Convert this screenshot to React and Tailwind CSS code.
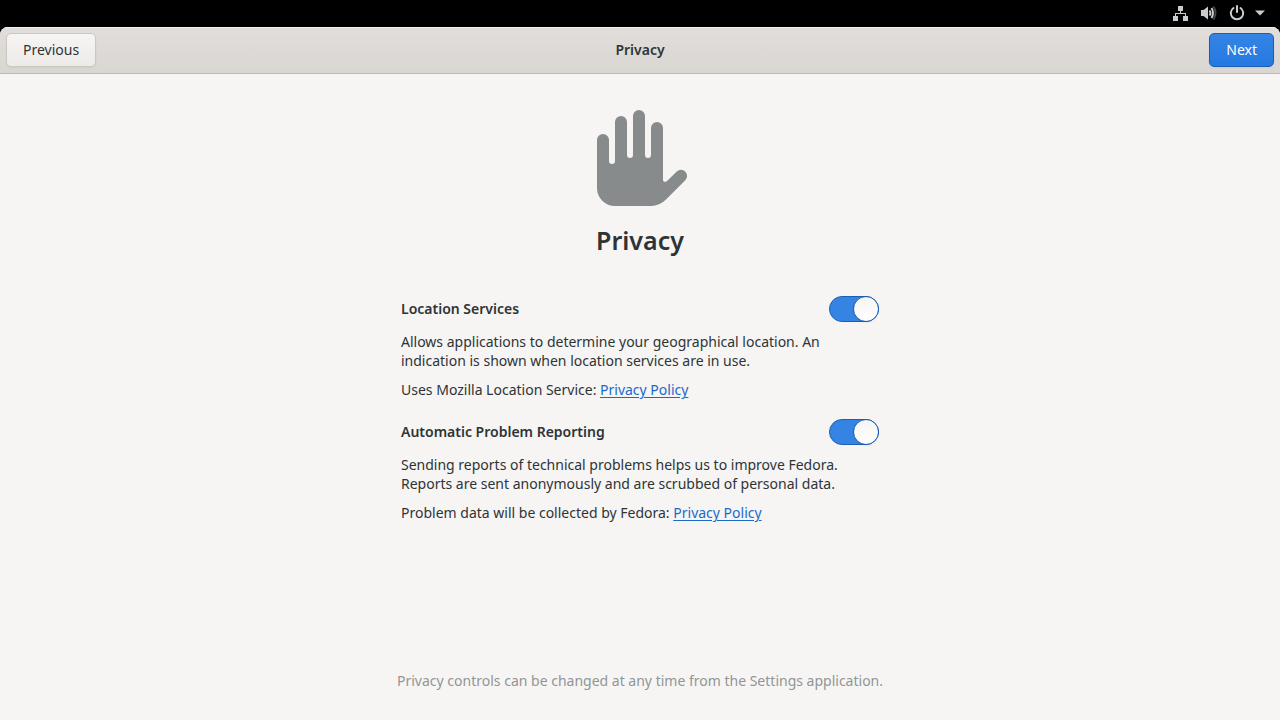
import React from "react";

function StatusBar() {
  return (
    <div className="flex h-[27px] shrink-0 items-start justify-end gap-3 bg-black pt-[5px] pr-[15px] text-[#cccccc]">
      <svg viewBox="0 0 16 16" className="size-4" fill="currentColor" role="img" aria-label="Wired network">
        <path d="M5 1h5v5H8v2h5v3h2v5h-5v-5h2V9H3v2h2v5H0v-5h2V8h5V6H5z" />
      </svg>
      <svg viewBox="0 0 16 16" className="size-4" fill="currentColor" role="img" aria-label="Volume">
        <path d="M0 5h2.500L7 1.500V14.500L2.500 11H0z" />
        <path d="M8.500 5.500Q10.500 8 8.500 10.500" fill="none" stroke="currentColor" strokeWidth="1.900" />
        <path d="M10.500 3Q13.500 8 10.500 13" fill="none" stroke="currentColor" strokeWidth="1.900" />
        <path d="M12.500 1.500Q16.500 8 12.500 14.500" fill="none" stroke="currentColor" strokeWidth="1.900" opacity="0.35" />
      </svg>
      <button type="button" aria-label="System menu" className="flex items-center gap-[10px]">
        <svg viewBox="0 0 16 16" className="size-4" fill="none" stroke="currentColor" strokeWidth="2" strokeLinecap="round">
          <path d="M8 1v6" />
          <path d="M4.500 3A6.200 6.200 0 1 0 11.500 3" />
        </svg>
        <svg viewBox="0 0 10 6" className="h-[6px] w-[10px]" fill="currentColor">
          <path d="M0 .5h10L5 5.500z" />
        </svg>
      </button>
    </div>
  );
}

function HandIcon() {
  return (
    <svg viewBox="0 0 96 96" className="size-24" fill="#888b8b" aria-hidden="true">
      <path d="M5 30a6 6 0 0 1 12 0V51a3 3 0 0 0 6 0V12a6 6 0 0 1 12 0V45a3 3 0 0 0 6 0V6a6 6 0 0 1 12 0V45a3 3 0 0 0 6 0V18a6 6 0 0 1 12 0V69.500c0 2.500 2 3 4 1.500L84.800 61.600a6 6 0 0 1 8.500 8.600L74 89.500Q67.500 96 59 96H23A18 18 0 0 1 5 78z" />
    </svg>
  );
}

function Setting({ id, title, children, source }) {
  return (
    <section>
      <div className="flex h-[26px] items-center justify-between">
        <label htmlFor={id} className="pb-[2px] font-semibold">
          {title}
        </label>
        <input
          id={id}
          type="checkbox"
          role="switch"
          defaultChecked
          className="flex h-[26px] w-[50px] appearance-none items-center justify-start rounded-full border border-[#cdc7c2] bg-[#deddda] before:-m-px before:block before:size-[26px] before:rounded-full before:border before:border-[#1b5fb4] before:bg-linear-to-b before:from-[#f6f5f4] before:to-white before:shadow-xs before:content-[''] checked:justify-end checked:border-[#1b5fb4] checked:bg-[#3584e4]"
        />
      </div>
      <p className="mt-[10px]">{children}</p>
      <p className="mt-[10px]">
        {source}{" "}
        <a href="#privacy-policy" className="text-[#1b6acb] underline decoration-1 underline-offset-2">
          Privacy Policy
        </a>
      </p>
    </section>
  );
}

export default function App() {
  return (
    <div className="flex min-h-screen flex-col bg-black font-['Noto_Sans',sans-serif] text-[14px] leading-[19px] text-[#2e3436]">
      <StatusBar />
      <div className="flex grow flex-col overflow-hidden rounded-t-lg bg-[#f6f5f4]">
        <header className="grid h-[47px] shrink-0 grid-cols-[1fr_auto_1fr] items-center border-b border-[#bfb8b1] bg-linear-to-b from-[#e1dedb] to-[#dad6d2] px-[6px] inset-shadow-[0_1px_0_#f3f2f1]">
          <button type="button" className="h-[34px] justify-self-start rounded-[5px] border border-[#cdc7c2] bg-linear-to-b from-[#f6f5f4] to-[#edebe9] px-4 pb-[2px] shadow-xs">
            Previous
          </button>
          <h1 className="pb-[2px] font-semibold">Privacy</h1>
          <button type="button" className="h-[34px] justify-self-end rounded-[5px] border border-[#1b5fb4] bg-linear-to-b from-[#3584e4] to-[#2379e2] px-4 pb-[2px] text-white shadow-xs">
            Next
          </button>
        </header>
        <main className="mx-auto flex w-[478px] max-w-full grow flex-col pt-9 pb-[30px]">
          <div className="flex flex-col items-center">
            <HandIcon />
            <h2 className="mt-[17px] text-[25px] leading-[34px] font-semibold">Privacy</h2>
          </div>
          <div className="mt-[39px] flex flex-col gap-5">
            <Setting id="location" title="Location Services" source="Uses Mozilla Location Service:">
              Allows applications to determine your geographical location. An indication is shown when location services are in use.
            </Setting>
            <Setting id="reporting" title="Automatic Problem Reporting" source="Problem data will be collected by Fedora:">
              Sending reports of technical problems helps us to improve Fedora. Reports are sent anonymously and are scrubbed of personal data.
            </Setting>
          </div>
          <p className="mt-auto self-center whitespace-nowrap text-[#929595]">
            Privacy controls can be changed at any time from the Settings application.
          </p>
        </main>
      </div>
    </div>
  );
}
